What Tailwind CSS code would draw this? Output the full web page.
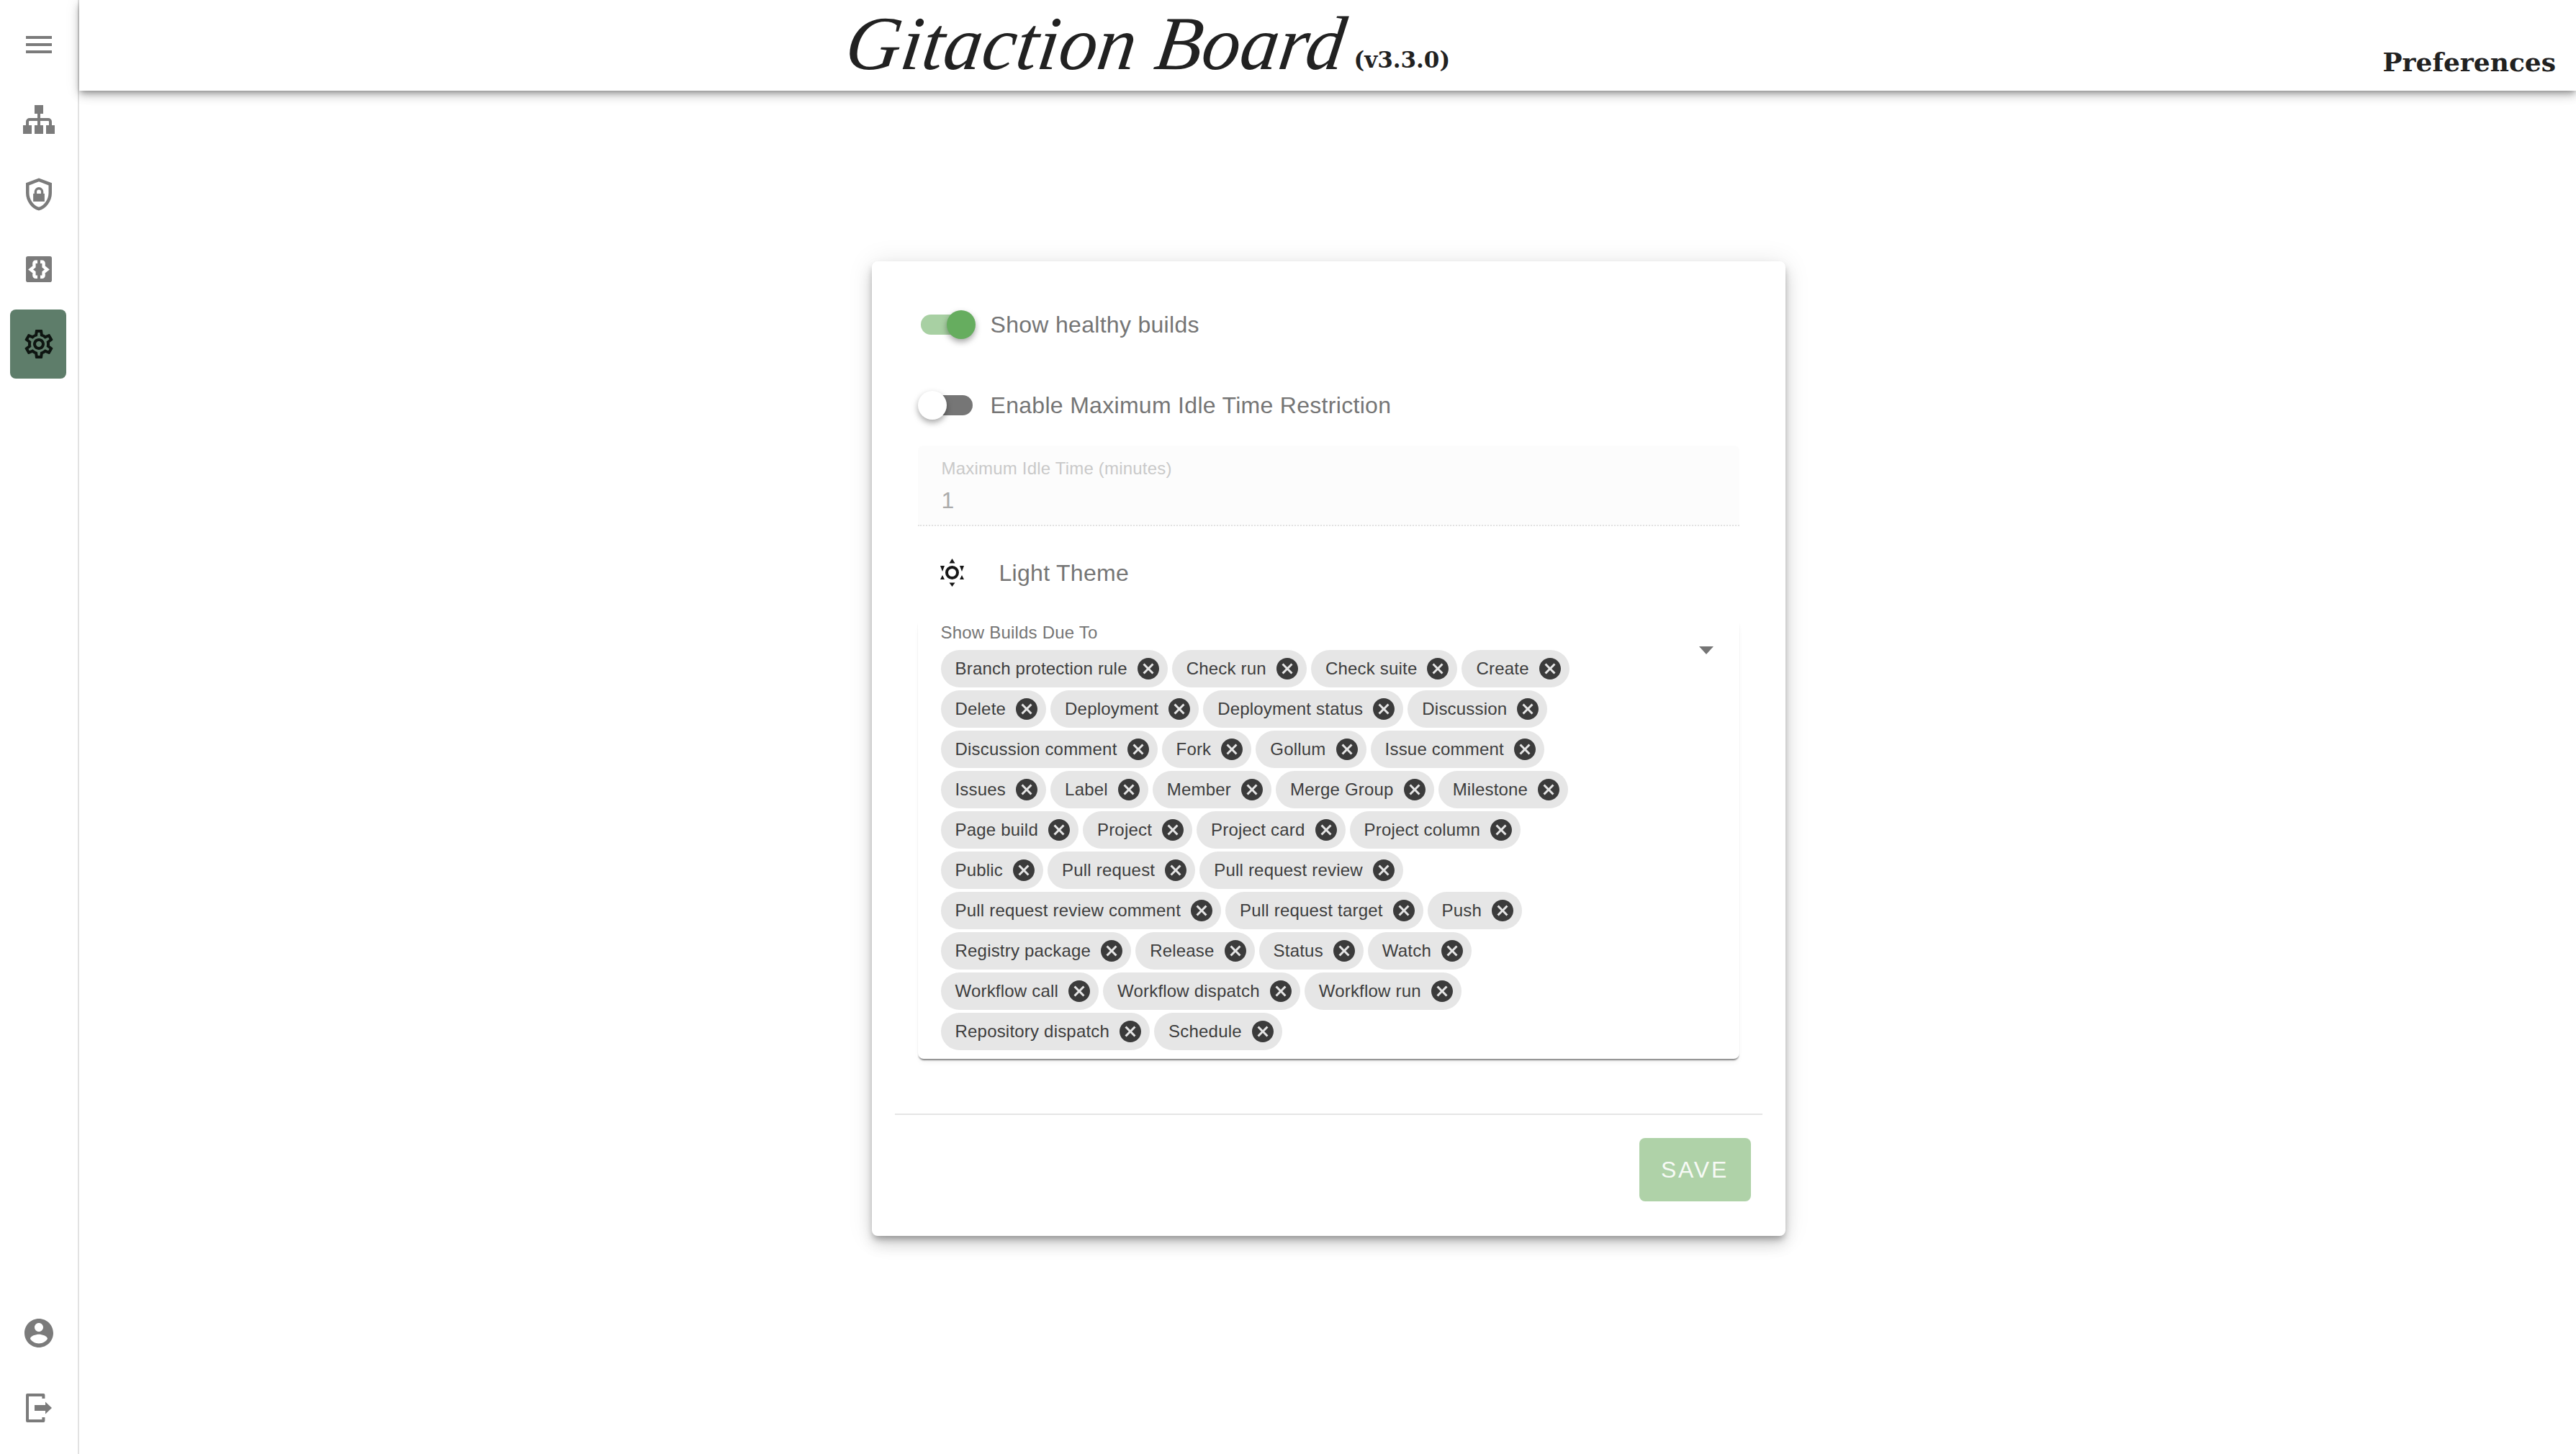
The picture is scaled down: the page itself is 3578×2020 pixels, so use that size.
<!doctype html>
<html>
<head>
<meta charset="utf-8">
<script src="https://cdn.jsdelivr.net/npm/@tailwindcss/browser@4"></script>
</head>
<body class="bg-white font-['Liberation_Sans',Arial,sans-serif]">
<svg class="hidden"><symbol id="x" viewBox="0 0 24 24"><path fill="#3b3b3b" d="M12 2C6.47 2 2 6.47 2 12s4.47 10 10 10 10-4.47 10-10S17.53 2 12 2zm5 13.59L15.59 17 12 13.41 8.41 17 7 15.59 10.59 12 7 8.41 8.41 7 12 10.59 15.59 7 17 8.41 13.41 12 17 15.59z"/></symbol></svg>
<div class="flex h-[2020px] w-[3578px] overflow-hidden">
  <aside class="flex h-full w-[110px] shrink-0 flex-col items-center border-r-2 border-[#e2e2e2] pt-[10px] pb-[12px]">
    <div class="flex h-[104px] items-center"><svg class="h-12 w-12" viewBox="0 0 24 24" fill="#7b7b7b"><path d="M3 18h18v-2H3v2zm0-5h18v-2H3v2zm0-7v2h18V6H3z"/></svg></div>
    <div class="flex h-[104px] items-center"><svg class="h-12 w-12" viewBox="0 0 24 24" fill="#7b7b7b"><path d="M9 2h6v6h-2v3h5.500A2.500 2.500 0 0 1 21 13.500V16h2v6h-6v-6h2v-2.500a.5.5 0 0 0-.5-.5H13v3h2v6H9v-6h2v-3H5.500a.5.5 0 0 0-.5.5V16h2v6H1v-6h2v-2.500A2.500 2.500 0 0 1 5.500 11H11V8H9z"/></svg></div>
    <div class="flex h-[104px] items-center"><svg class="h-[54px] w-[54px]" viewBox="0 0 24 24" fill="#7b7b7b"><path d="M12 2 4 5v6.090c0 5.050 3.410 9.760 8 10.910 4.590-1.150 8-5.860 8-10.910V5l-8-3zm6 9.090c0 4-2.550 7.700-6 8.830-3.450-1.130-6-4.820-6-8.830v-4.700l6-2.250 6 2.250v4.700z"/><path fill-rule="evenodd" d="M15.500 11.500h-.7v-1.100a2.800 2.800 0 0 0-5.600 0v1.100h-.7v4.900h7zM13.300 11.500h-2.600v-1.100a1.300 1.300 0 0 1 2.600 0z"/></svg></div>
    <div class="flex h-[104px] items-center"><svg class="h-12 w-12" viewBox="0 0 24 24"><rect x="3" y="3" width="18" height="18" rx="1.400" fill="#7b7b7b"/><path d="M11 6.900H9.700a1 1 0 0 0-1 1v2.300L6.300 12.200l2.400 2v2.200a1 1 0 0 0 1 1H11M13 6.900h1.300a1 1 0 0 1 1 1v2.300l2.400 2-2.400 2v2.200a1 1 0 0 1-1 1H13" fill="none" stroke="#fff" stroke-width="2.200"/></svg></div>
    <div class="flex h-[104px] items-center"><div class="flex h-[96px] w-[78px] -translate-x-px items-center justify-center rounded-lg bg-[#5e7d6a] pl-[2px]"><svg class="h-12 w-12" viewBox="0 0 24 24" fill="#0e1511"><path d="M19.43 12.98c.04-.32.07-.64.07-.98 0-.34-.03-.66-.07-.98l2.11-1.65c.19-.15.24-.42.12-.64l-2-3.46c-.09-.16-.26-.25-.44-.25-.06 0-.12.01-.17.03l-2.49 1c-.52-.4-1.08-.73-1.69-.98l-.38-2.65C14.46 2.18 14.25 2 14 2h-4c-.25 0-.46.18-.49.42l-.38 2.65c-.61.25-1.17.59-1.69.98l-2.49-1c-.06-.02-.12-.03-.18-.03-.17 0-.34.09-.43.25l-2 3.46c-.13.22-.07.49.12.64l2.11 1.65c-.04.32-.07.65-.07.98 0 .33.03.66.07.98l-2.11 1.65c-.19.15-.24.42-.12.64l2 3.46c.09.16.26.25.44.25.06 0 .12-.01.17-.03l2.49-1c.52.4 1.08.73 1.69.98l.38 2.65c.03.24.24.42.49.42h4c.25 0 .46-.18.49-.42l.38-2.65c.61-.25 1.17-.59 1.69-.98l2.49 1c.06.02.12.03.18.03.17 0 .34-.09.43-.25l2-3.46c.12-.22.07-.49-.12-.64l-2.11-1.65zm-1.98-1.71c.04.31.05.52.05.73 0 .21-.02.43-.05.73l-.14 1.13.89.7 1.08.84-.7 1.21-1.27-.51-1.04-.42-.9.68c-.43.32-.84.56-1.25.73l-1.06.43-.16 1.13-.2 1.35h-1.4l-.19-1.35-.16-1.13-1.06-.43c-.43-.18-.83-.41-1.23-.71l-.91-.7-1.06.43-1.27.51-.7-1.21 1.08-.84.89-.7-.14-1.13c-.03-.31-.05-.54-.05-.74s.02-.43.05-.73l.14-1.13-.89-.7-1.08-.84.7-1.21 1.27.51 1.04.42.9-.68c.43-.32.84-.56 1.25-.73l1.06-.43.16-1.13.2-1.35h1.39l.19 1.35.16 1.13 1.06.43c.43.18.83.41 1.23.71l.91.7 1.06-.43 1.27-.51.7 1.21-1.07.85-.89.7.14 1.13zM12 8c-2.21 0-4 1.79-4 4s1.79 4 4 4 4-1.79 4-4-1.79-4-4-4zm0 6c-1.1 0-2-.9-2-2s.9-2 2-2 2 .9 2 2-.9 2-2 2z"/></svg></div></div>
    <div class="mt-auto flex h-[104px] items-center"><svg class="h-12 w-12" viewBox="0 0 24 24" fill="#7b7b7b"><path d="M12 2C6.48 2 2 6.48 2 12s4.48 10 10 10 10-4.48 10-10S17.52 2 12 2zm0 3c1.66 0 3 1.34 3 3s-1.34 3-3 3-3-1.34-3-3 1.34-3 3-3zm0 14.2c-2.5 0-4.71-1.28-6-3.22.03-1.99 4-3.08 6-3.08 1.99 0 5.97 1.09 6 3.08-1.29 1.94-3.5 3.22-6 3.22z"/></svg></div>
    <div class="flex h-[104px] items-center"><svg class="h-12 w-12" viewBox="0 0 24 24" fill="#7b7b7b"><path d="M4 2h11.200a1 1 0 0 1 1 1v2.500h-2V4H5v16h9.200v-1.500h2V21a1 1 0 0 1-1 1H4a1 1 0 0 1-1-1V3a1 1 0 0 1 1-1z"/><path d="M9 10h7.500V7.800L21 12l-4.500 4.200V14H9z"/></svg></div>
  </aside>
  <main class="flex min-w-0 flex-1 flex-col">
    <header class="relative flex h-[126px] shrink-0 bg-white shadow-[0_4px_8px_-2px_rgba(0,0,0,0.35),0_8px_12px_0_rgba(0,0,0,0.14),0_2px_20px_0_rgba(0,0,0,0.1)]">
      <div class="ml-[1066px] flex items-start">
        <span class="mt-[-2px] inline-block -skew-x-[8deg] font-['Liberation_Serif',serif] text-[106px] leading-[125px] tracking-[0.3px] text-[#212121] italic">Gitaction Board</span>
        <span class="mt-[63px] ml-[12px] font-['DejaVu_Serif',serif] text-[31px] leading-[40px] font-bold text-[#212121]">(v3.3.0)</span>
      </div>
      <span class="mt-[63px] mr-[28px] ml-auto font-['DejaVu_Serif',serif] text-[36px] leading-[46px] font-bold text-[#212121]">Preferences</span>
    </header>
    <div class="flex flex-1 justify-center pt-[237px] pl-[2px]">
      <section class="h-[1354px] w-[1269px] rounded-lg bg-white px-8 pt-8 shadow-[0_6px_10px_-2px_rgba(0,0,0,0.3),0_12px_20px_0_rgba(0,0,0,0.14),0_2px_36px_0_rgba(0,0,0,0.1)]">
        <div class="px-8">
          <div class="flex h-[112px] items-center">
            <div class="relative h-10 w-20 shrink-0">
              <div class="absolute top-[6px] left-1 h-7 w-[71px] rounded-full bg-[#a8d0a3]"></div>
              <div class="absolute top-0 left-10 h-10 w-10 rounded-full bg-[#66ad5f] shadow-[0_4px_8px_rgba(0,0,0,0.35)]"></div>
            </div>
            <span class="ml-[21px] text-[32px] tracking-[0.3px] text-[#757575]">Show healthy builds</span>
          </div>
          <div class="flex h-[112px] items-center">
            <div class="relative h-10 w-20 shrink-0">
              <div class="absolute top-[6px] left-1 h-7 w-[72px] rounded-full bg-[#767676]"></div>
              <div class="absolute top-0 left-0 h-10 w-10 rounded-full bg-white shadow-[0_4px_8px_rgba(0,0,0,0.35)]"></div>
            </div>
            <span class="ml-[21px] text-[32px] tracking-[0.3px] text-[#757575]">Enable Maximum Idle Time Restriction</span>
          </div>
          <div class="flex h-[112px] flex-col rounded-t-lg border-b-2 border-dotted border-[#e2e2e2] bg-[#fcfcfc] px-[33px]">
            <span class="mt-[18px] text-[24px] leading-[28px] tracking-[0.2px] text-[#c9c9c9]">Maximum Idle Time (minutes)</span>
            <span class="mt-[12px] text-[32px] leading-[36px] text-[#ababab]">1</span>
          </div>
          <div class="flex h-[132px] items-center pb-[2px] pl-[31px]">
            <svg class="h-[40px] w-[34px]" viewBox="0 0 34 40" fill="#161616"><circle cx="16.500" cy="19.500" r="7.500" fill="none" stroke="#161616" stroke-width="4"/><path d="M16.500 0l4 6.500h-8zM16.500 39l4-5.500h-8zM0 10h6l-3 8zM33 10h-6l3 8zM0 29h6l-3-6zM33 29h-6l3-6z"/></svg>
            <span class="ml-[48px] text-[32px] tracking-[0.3px] text-[#757575]">Light Theme</span>
          </div>
          <div class="relative rounded-b-lg bg-white px-8 pb-3 shadow-[0_3px_2px_-1px_rgba(0,0,0,0.45),0_6px_8px_-3px_rgba(0,0,0,0.08)]">
            <div class="h-[30px] text-[24px] leading-[32px] tracking-[0.2px] text-[#757575]">Show Builds Due To</div>
            <svg class="absolute top-[35px] right-9 h-[11px] w-5" viewBox="0 0 20 11" fill="#757575"><path d="M0 0h20L10 11z"/></svg>
            <div class="mt-[10px] flex flex-col gap-1 text-[24px] tracking-[0.2px] text-[#3d3d3d]">
              <div class="flex gap-[6px]">
                <span class="flex h-[52px] items-center rounded-full bg-[#e6e6e6] pr-[9px] pl-5">Branch protection rule<svg class="ml-[11px] h-9 w-9"><use href="#x"/></svg></span>
                <span class="flex h-[52px] items-center rounded-full bg-[#e6e6e6] pr-[9px] pl-5">Check run<svg class="ml-[11px] h-9 w-9"><use href="#x"/></svg></span>
                <span class="flex h-[52px] items-center rounded-full bg-[#e6e6e6] pr-[9px] pl-5">Check suite<svg class="ml-[11px] h-9 w-9"><use href="#x"/></svg></span>
                <span class="flex h-[52px] items-center rounded-full bg-[#e6e6e6] pr-[9px] pl-5">Create<svg class="ml-[11px] h-9 w-9"><use href="#x"/></svg></span>
              </div>
              <div class="flex gap-[6px]">
                <span class="flex h-[52px] items-center rounded-full bg-[#e6e6e6] pr-[9px] pl-5">Delete<svg class="ml-[11px] h-9 w-9"><use href="#x"/></svg></span>
                <span class="flex h-[52px] items-center rounded-full bg-[#e6e6e6] pr-[9px] pl-5">Deployment<svg class="ml-[11px] h-9 w-9"><use href="#x"/></svg></span>
                <span class="flex h-[52px] items-center rounded-full bg-[#e6e6e6] pr-[9px] pl-5">Deployment status<svg class="ml-[11px] h-9 w-9"><use href="#x"/></svg></span>
                <span class="flex h-[52px] items-center rounded-full bg-[#e6e6e6] pr-[9px] pl-5">Discussion<svg class="ml-[11px] h-9 w-9"><use href="#x"/></svg></span>
              </div>
              <div class="flex gap-[6px]">
                <span class="flex h-[52px] items-center rounded-full bg-[#e6e6e6] pr-[9px] pl-5">Discussion comment<svg class="ml-[11px] h-9 w-9"><use href="#x"/></svg></span>
                <span class="flex h-[52px] items-center rounded-full bg-[#e6e6e6] pr-[9px] pl-5">Fork<svg class="ml-[11px] h-9 w-9"><use href="#x"/></svg></span>
                <span class="flex h-[52px] items-center rounded-full bg-[#e6e6e6] pr-[9px] pl-5">Gollum<svg class="ml-[11px] h-9 w-9"><use href="#x"/></svg></span>
                <span class="flex h-[52px] items-center rounded-full bg-[#e6e6e6] pr-[9px] pl-5">Issue comment<svg class="ml-[11px] h-9 w-9"><use href="#x"/></svg></span>
              </div>
              <div class="flex gap-[6px]">
                <span class="flex h-[52px] items-center rounded-full bg-[#e6e6e6] pr-[9px] pl-5">Issues<svg class="ml-[11px] h-9 w-9"><use href="#x"/></svg></span>
                <span class="flex h-[52px] items-center rounded-full bg-[#e6e6e6] pr-[9px] pl-5">Label<svg class="ml-[11px] h-9 w-9"><use href="#x"/></svg></span>
                <span class="flex h-[52px] items-center rounded-full bg-[#e6e6e6] pr-[9px] pl-5">Member<svg class="ml-[11px] h-9 w-9"><use href="#x"/></svg></span>
                <span class="flex h-[52px] items-center rounded-full bg-[#e6e6e6] pr-[9px] pl-5">Merge Group<svg class="ml-[11px] h-9 w-9"><use href="#x"/></svg></span>
                <span class="flex h-[52px] items-center rounded-full bg-[#e6e6e6] pr-[9px] pl-5">Milestone<svg class="ml-[11px] h-9 w-9"><use href="#x"/></svg></span>
              </div>
              <div class="flex gap-[6px]">
                <span class="flex h-[52px] items-center rounded-full bg-[#e6e6e6] pr-[9px] pl-5">Page build<svg class="ml-[11px] h-9 w-9"><use href="#x"/></svg></span>
                <span class="flex h-[52px] items-center rounded-full bg-[#e6e6e6] pr-[9px] pl-5">Project<svg class="ml-[11px] h-9 w-9"><use href="#x"/></svg></span>
                <span class="flex h-[52px] items-center rounded-full bg-[#e6e6e6] pr-[9px] pl-5">Project card<svg class="ml-[11px] h-9 w-9"><use href="#x"/></svg></span>
                <span class="flex h-[52px] items-center rounded-full bg-[#e6e6e6] pr-[9px] pl-5">Project column<svg class="ml-[11px] h-9 w-9"><use href="#x"/></svg></span>
              </div>
              <div class="flex gap-[6px]">
                <span class="flex h-[52px] items-center rounded-full bg-[#e6e6e6] pr-[9px] pl-5">Public<svg class="ml-[11px] h-9 w-9"><use href="#x"/></svg></span>
                <span class="flex h-[52px] items-center rounded-full bg-[#e6e6e6] pr-[9px] pl-5">Pull request<svg class="ml-[11px] h-9 w-9"><use href="#x"/></svg></span>
                <span class="flex h-[52px] items-center rounded-full bg-[#e6e6e6] pr-[9px] pl-5">Pull request review<svg class="ml-[11px] h-9 w-9"><use href="#x"/></svg></span>
              </div>
              <div class="flex gap-[6px]">
                <span class="flex h-[52px] items-center rounded-full bg-[#e6e6e6] pr-[9px] pl-5">Pull request review comment<svg class="ml-[11px] h-9 w-9"><use href="#x"/></svg></span>
                <span class="flex h-[52px] items-center rounded-full bg-[#e6e6e6] pr-[9px] pl-5">Pull request target<svg class="ml-[11px] h-9 w-9"><use href="#x"/></svg></span>
                <span class="flex h-[52px] items-center rounded-full bg-[#e6e6e6] pr-[9px] pl-5">Push<svg class="ml-[11px] h-9 w-9"><use href="#x"/></svg></span>
              </div>
              <div class="flex gap-[6px]">
                <span class="flex h-[52px] items-center rounded-full bg-[#e6e6e6] pr-[9px] pl-5">Registry package<svg class="ml-[11px] h-9 w-9"><use href="#x"/></svg></span>
                <span class="flex h-[52px] items-center rounded-full bg-[#e6e6e6] pr-[9px] pl-5">Release<svg class="ml-[11px] h-9 w-9"><use href="#x"/></svg></span>
                <span class="flex h-[52px] items-center rounded-full bg-[#e6e6e6] pr-[9px] pl-5">Status<svg class="ml-[11px] h-9 w-9"><use href="#x"/></svg></span>
                <span class="flex h-[52px] items-center rounded-full bg-[#e6e6e6] pr-[9px] pl-5">Watch<svg class="ml-[11px] h-9 w-9"><use href="#x"/></svg></span>
              </div>
              <div class="flex gap-[6px]">
                <span class="flex h-[52px] items-center rounded-full bg-[#e6e6e6] pr-[9px] pl-5">Workflow call<svg class="ml-[11px] h-9 w-9"><use href="#x"/></svg></span>
                <span class="flex h-[52px] items-center rounded-full bg-[#e6e6e6] pr-[9px] pl-5">Workflow dispatch<svg class="ml-[11px] h-9 w-9"><use href="#x"/></svg></span>
                <span class="flex h-[52px] items-center rounded-full bg-[#e6e6e6] pr-[9px] pl-5">Workflow run<svg class="ml-[11px] h-9 w-9"><use href="#x"/></svg></span>
              </div>
              <div class="flex gap-[6px]">
                <span class="flex h-[52px] items-center rounded-full bg-[#e6e6e6] pr-[9px] pl-5">Repository dispatch<svg class="ml-[11px] h-9 w-9"><use href="#x"/></svg></span>
                <span class="flex h-[52px] items-center rounded-full bg-[#e6e6e6] pr-[9px] pl-5">Schedule<svg class="ml-[11px] h-9 w-9"><use href="#x"/></svg></span>
              </div>
            </div>
          </div>
        </div>
        <div class="mt-[76px] h-[2px] bg-[#e5e5e5]"></div>
        <div class="mt-8 flex justify-end pr-4">
          <button class="h-[88px] w-[155px] rounded-lg bg-[#afd2a8] text-[32px] tracking-[2.8px] text-[#f7faf6]">SAVE</button>
        </div>
      </section>
    </div>
  </main>
</div>
</body>
</html>
